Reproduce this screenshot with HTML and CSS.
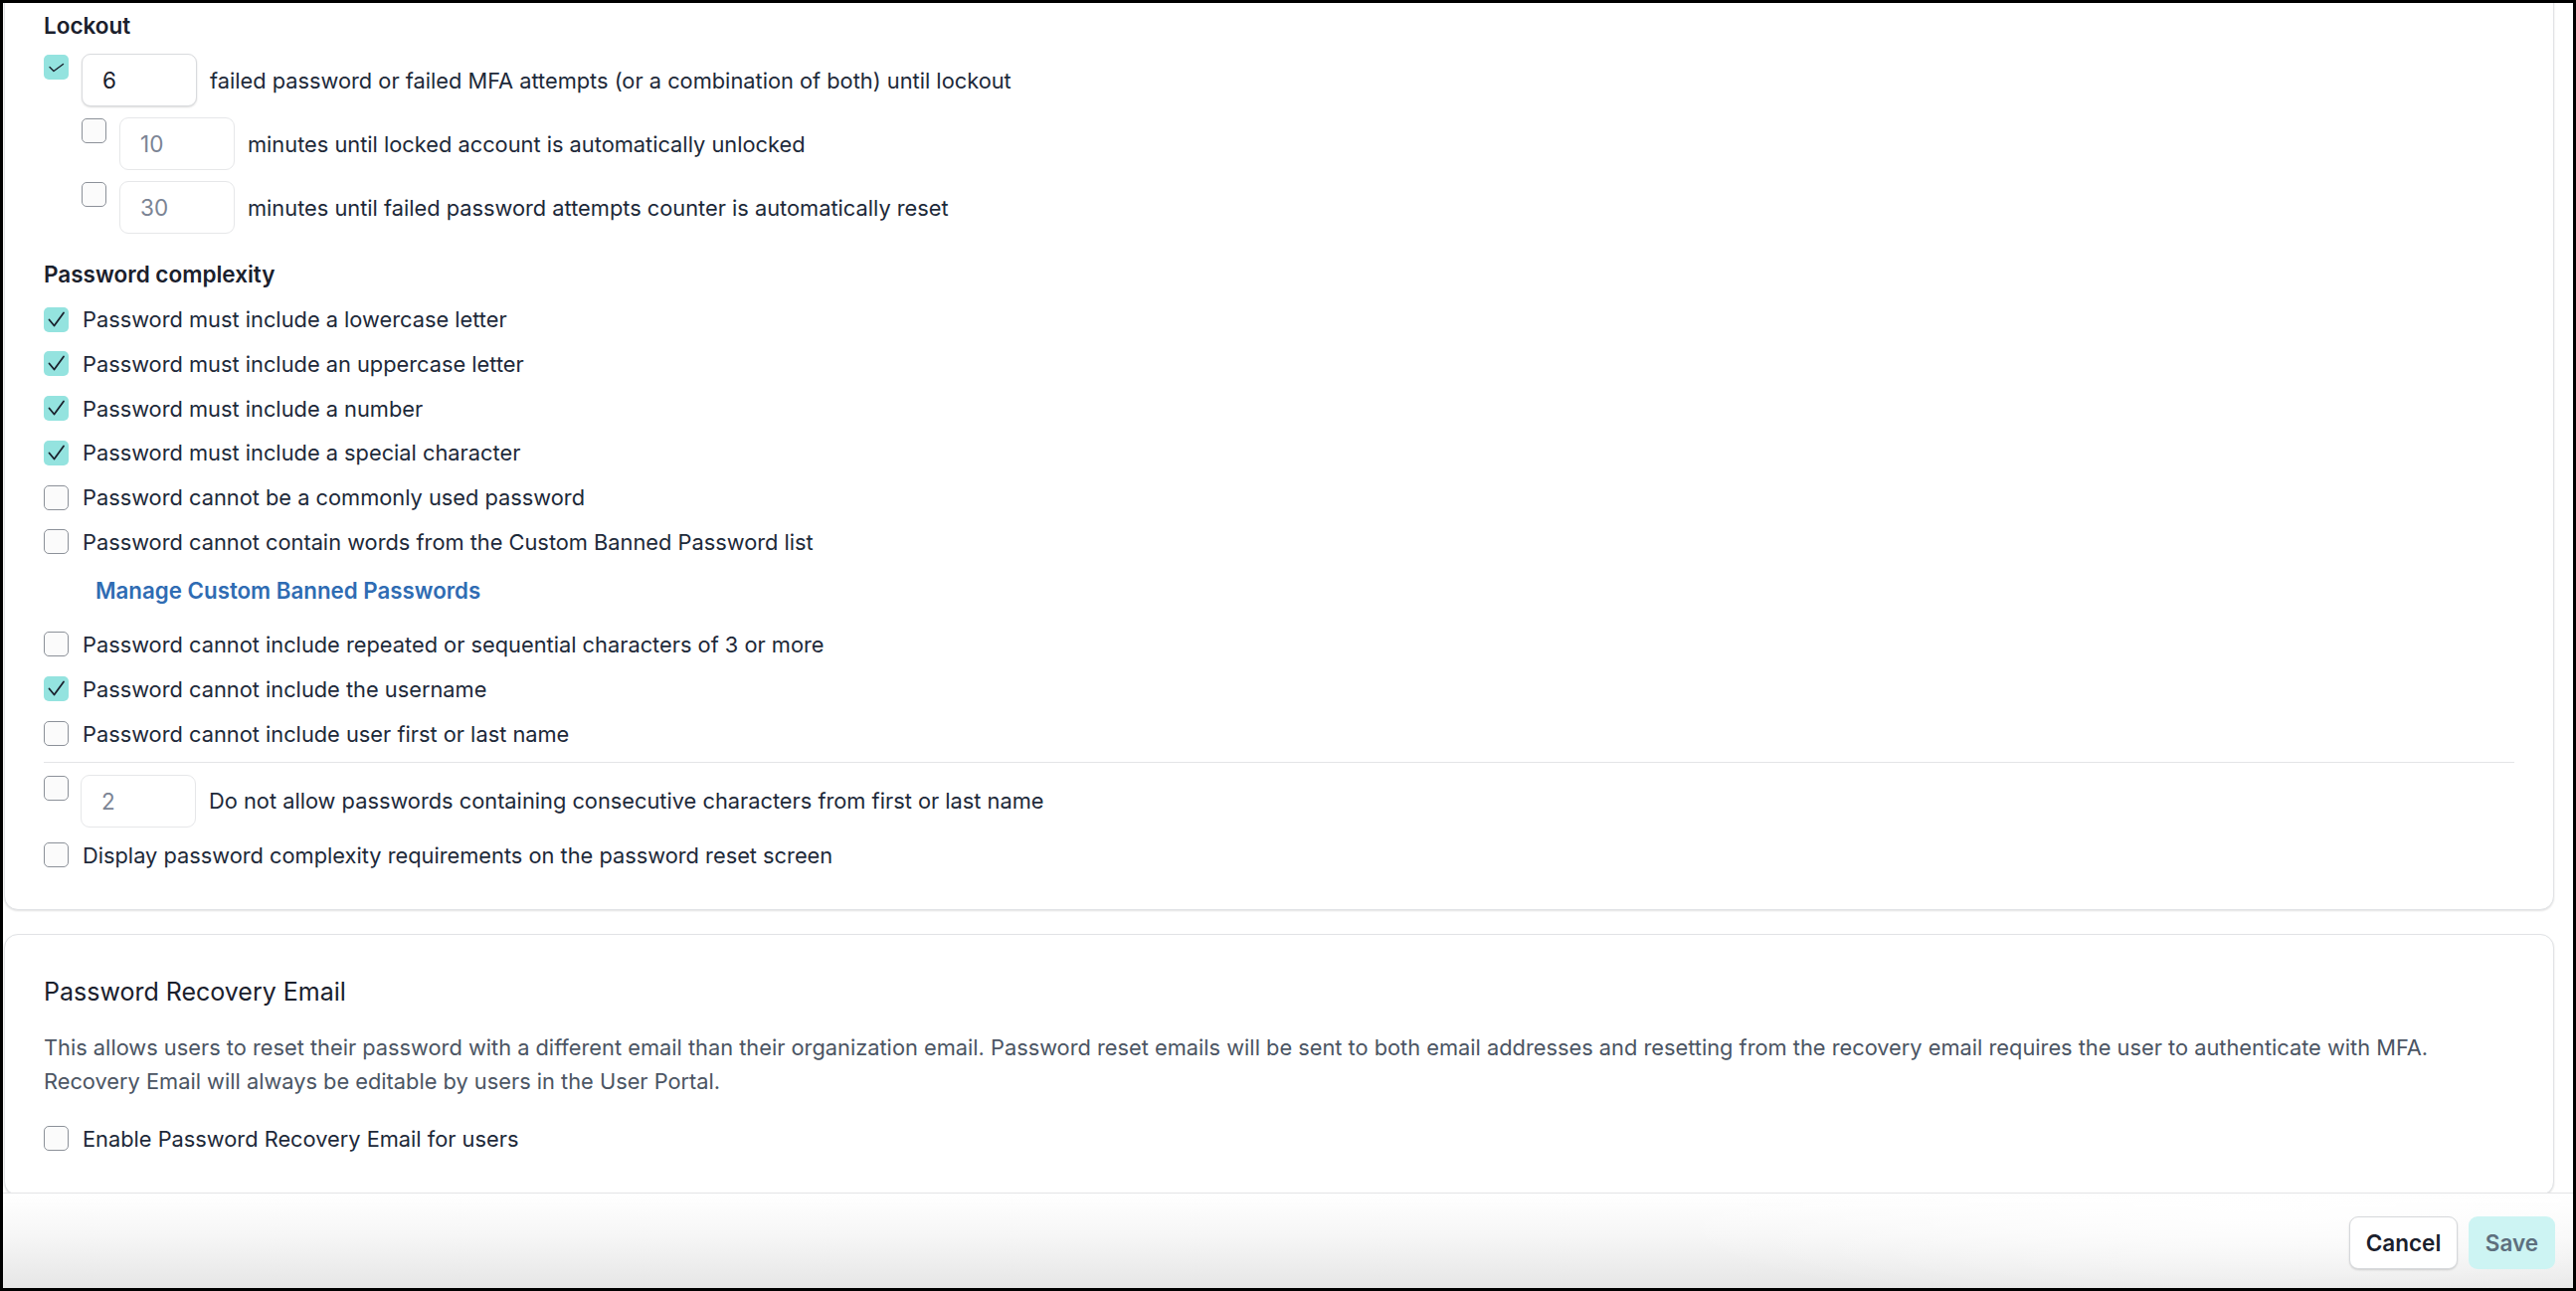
FILE: index.html
```html
<!DOCTYPE html>
<html lang="en">
<head>
<meta charset="utf-8">
<title>Password settings</title>
<link rel="stylesheet" href="styles.css">
</head>
<body>
<div class="frame">
  <main class="scroll">
    <section class="card card-first">
      <h3 class="group-title">Lockout</h3>
      <div class="lock-row">
        <span class="cb checked"><svg viewBox="0 0 25 25" width="25" height="25"><polyline points="6,12.5 10,16.5 19.5,9.5" fill="none" stroke="#1a202c" stroke-width="1.4" stroke-linecap="round" stroke-linejoin="round"/></svg></span>
        <span class="num">6</span>
        <span class="label">failed password or failed MFA attempts (or a combination of both) until lockout</span>
      </div>
      <div class="lock-row sub">
        <span class="cb"></span>
        <span class="num disabled">10</span>
        <span class="label">minutes until locked account is automatically unlocked</span>
      </div>
      <div class="lock-row sub">
        <span class="cb"></span>
        <span class="num disabled">30</span>
        <span class="label">minutes until failed password attempts counter is automatically reset</span>
      </div>

      <h3 class="group-title complexity-title">Password complexity</h3>
      <ul class="opts">
        <li class="opt"><span class="cb checked"><svg viewBox="0 0 25 25" width="25" height="25"><polyline points="5.5,12.5 10.5,18.5 20,5.5" fill="none" stroke="#1a202c" stroke-width="1.8" stroke-linecap="round" stroke-linejoin="round"/></svg></span><span class="label">Password must include a lowercase letter</span></li>
        <li class="opt"><span class="cb checked"><svg viewBox="0 0 25 25" width="25" height="25"><polyline points="5.5,12.5 10.5,18.5 20,5.5" fill="none" stroke="#1a202c" stroke-width="1.8" stroke-linecap="round" stroke-linejoin="round"/></svg></span><span class="label">Password must include an uppercase letter</span></li>
        <li class="opt"><span class="cb checked"><svg viewBox="0 0 25 25" width="25" height="25"><polyline points="5.5,12.5 10.5,18.5 20,5.5" fill="none" stroke="#1a202c" stroke-width="1.8" stroke-linecap="round" stroke-linejoin="round"/></svg></span><span class="label">Password must include a number</span></li>
        <li class="opt"><span class="cb checked"><svg viewBox="0 0 25 25" width="25" height="25"><polyline points="5.5,12.5 10.5,18.5 20,5.5" fill="none" stroke="#1a202c" stroke-width="1.8" stroke-linecap="round" stroke-linejoin="round"/></svg></span><span class="label">Password must include a special character</span></li>
        <li class="opt"><span class="cb"></span><span class="label">Password cannot be a commonly used password</span></li>
        <li class="opt"><span class="cb"></span><span class="label">Password cannot contain words from the Custom Banned Password list</span></li>
      </ul>
      <a class="manage-link" href="#">Manage Custom Banned Passwords</a>
      <ul class="opts opts-after">
        <li class="opt"><span class="cb"></span><span class="label">Password cannot include repeated or sequential characters of 3 or more</span></li>
        <li class="opt"><span class="cb checked"><svg viewBox="0 0 25 25" width="25" height="25"><polyline points="5.5,12.5 10.5,18.5 20,5.5" fill="none" stroke="#1a202c" stroke-width="1.8" stroke-linecap="round" stroke-linejoin="round"/></svg></span><span class="label">Password cannot include the username</span></li>
        <li class="opt"><span class="cb"></span><span class="label">Password cannot include user first or last name</span></li>
      </ul>
      <hr class="divider">
      <div class="lock-row consec">
        <span class="cb"></span>
        <span class="num disabled">2</span>
        <span class="label">Do not allow passwords containing consecutive characters from first or last name</span>
      </div>
      <ul class="opts opts-last">
        <li class="opt"><span class="cb"></span><span class="label">Display password complexity requirements on the password reset screen</span></li>
      </ul>
    </section>

    <section class="card card-recovery">
      <h2 class="card-title">Password Recovery Email</h2>
      <p class="desc">This allows users to reset their password with a different email than their organization email. Password reset emails will be sent to both email addresses and resetting from the recovery email requires the user to authenticate with MFA. Recovery Email will always be editable by users in the User Portal.</p>
      <ul class="opts">
        <li class="opt"><span class="cb"></span><span class="label">Enable Password Recovery Email for users</span></li>
      </ul>
    </section>
  </main>

  <footer class="footer">
    <button class="btn btn-cancel" type="button">Cancel</button>
    <button class="btn btn-save" type="button">Save</button>
  </footer>
</div>
</body>
</html>
```

FILE: styles.css
```css
* {
  box-sizing: border-box;
}

html, body {
  margin: 0;
  padding: 0;
  background: #000;
}

body {
  font-family: Inter, "Noto Sans", "Liberation Sans", sans-serif;
  color: #1d2939;
  font-size: 21.8px;
}

.frame {
  width: 2590px;
  height: 1298px;
  border: 3px solid #000;
  background: #fff;
  display: flex;
  flex-direction: column;
  overflow: hidden;
}

.scroll {
  flex: 1;
  overflow: hidden;
  padding: 0 19px 0 1px;
  background: #fff;
}

.card {
  background: #fff;
  border: 1px solid #e1e3e6;
  border-radius: 14px;
  box-shadow: 0 1px 2px rgba(0, 0, 0, 0.12);
  padding: 0 39px;
}

.card-first {
  margin-top: -20px;
  padding-top: 28px;
  padding-bottom: 40px;
}

.group-title {
  margin: 0;
  font-size: 22.5px;
  line-height: 28px;
  font-weight: 600;
  color: #1a202c;
}

.complexity-title {
  margin-top: 27px;
}

.lock-row {
  display: flex;
  align-items: center;
  gap: 13px;
  margin-top: 11px;
}

.card-first > .group-title + .lock-row {
  margin-top: 14px;
}

.lock-row.sub {
  padding-left: 38px;
}

.lock-row .cb {
  align-self: flex-start;
  margin-top: 1px;
}

.lock-row.consec {
  margin-top: 12px;
  gap: 12px;
}

.lock-row.consec .num {
  margin-right: 1px;
}

.num {
  width: 116px;
  height: 53px;
  flex: none;
  display: flex;
  align-items: center;
  padding-left: 20px;
  border: 1px solid #d9dbde;
  border-radius: 9px;
  background: #fff;
  box-shadow: 0 1px 2px rgba(0, 0, 0, 0.14);
  color: #1a202c;
  font-size: 22.5px;
}

.num.disabled {
  border-color: #e6e7e9;
  box-shadow: none;
  color: #7b8494;
}

.label {
  line-height: 28px;
  white-space: nowrap;
}

.cb {
  width: 25px;
  height: 25px;
  flex: none;
  border-radius: 5px;
  border: 1.5px solid #8c9199;
  background: #fbfbfb;
  display: inline-flex;
}

.cb.checked {
  border: none;
  background: #94e3df;
}

.cb svg {
  display: block;
}

.opts {
  list-style: none;
  margin: 17px 0 0;
  padding: 0;
  display: flex;
  flex-direction: column;
  gap: 16.8px;
}

.opt {
  display: flex;
  align-items: center;
  gap: 14px;
  height: 28px;
}

.manage-link {
  display: block;
  margin-top: 21px;
  padding-left: 52px;
  line-height: 28px;
  font-size: 22.3px;
  font-weight: 600;
  color: #2f6cb3;
  text-decoration: none;
}

.opts-after {
  margin-top: 26px;
  gap: 17px;
}

.divider {
  margin: 14px 0 0;
  border: 0;
  border-top: 1px solid #e4e5e7;
  height: 0;
}

.opts-last {
  margin-top: 14px;
}

.card-recovery {
  margin-top: 24px;
  padding-top: 42px;
  padding-bottom: 42px;
}

.card-title {
  margin: 0;
  font-size: 25px;
  line-height: 30px;
  font-weight: 400;
  color: #1a202c;
}

.desc {
  margin: 24px 0 0;
  line-height: 34.5px;
  color: #4b5563;
  font-size: 21.8px;
}

.card-recovery .opts {
  margin-top: 26px;
}

.footer {
  flex: none;
  height: 96px;
  border-top: 1px solid #e3e4e6;
  background:
    radial-gradient(ellipse 900px 160px at 88% 10%, rgba(255, 255, 255, 0.95), rgba(255, 255, 255, 0) 70%),
    linear-gradient(to bottom, #ffffff 0%, #f6f6f6 45%, #e6e6e6 100%);
  display: flex;
  align-items: center;
  justify-content: flex-end;
  gap: 11px;
  padding: 4px 18px 0 0;
}

.btn {
  height: 53px;
  border-radius: 9px;
  font-family: Inter, "Noto Sans", "Liberation Sans", sans-serif;
  font-size: 22.5px;
  font-weight: 600;
  cursor: pointer;
}

.btn-cancel {
  width: 109px;
  background: #fff;
  border: 1px solid #d6d8db;
  box-shadow: 0 1px 2px rgba(0, 0, 0, 0.15);
  color: #1a202c;
}

.btn-save {
  width: 87px;
  background: #cdf4f3;
  border: none;
  color: #5d6f7e;
}
```
